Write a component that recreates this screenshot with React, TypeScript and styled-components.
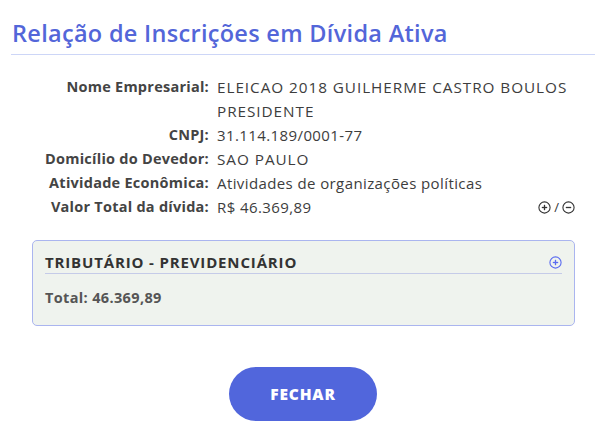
import React from "react";
import styled, { createGlobalStyle } from "styled-components";

const GlobalStyle = createGlobalStyle`
  html, body {
    margin: 0;
    padding: 0;
    background: #fff;
    font-family: "Open Sans", "Liberation Sans", sans-serif;
  }
`;

const Page = styled.div`
  width: 608px;
  height: 438px;
  padding: 18px 13px 0 11px;
  box-sizing: border-box;
  display: flex;
  flex-direction: column;
`;

const Title = styled.h1`
  margin: 0;
  padding: 0 0 6px 1px;
  font-size: 23.5px;
  line-height: 30px;
  font-weight: 600;
  color: #5366d9;
  border-bottom: 1px solid #cdd6f7;
  letter-spacing: 0.3px;
`;

const InfoGrid = styled.div`
  display: grid;
  grid-template-columns: 198px 1fr auto;
  column-gap: 8px;
  margin-top: 20px;
  font-size: 14.5px;
  line-height: 24px;
  color: #444;
`;

const Label = styled.span`
  text-align: right;
  font-weight: 700;
  color: #444;
  letter-spacing: 0.25px;
`;

const Value = styled.span<{ $span?: boolean; $caps?: boolean }>`
  grid-column: ${(p) => (p.$span ? "2 / 4" : "2")};
  padding-right: 20px;
  font-size: ${(p) => (p.$caps ? "15.3px" : "15px")};
  letter-spacing: ${(p) => (p.$caps ? "0.95px" : "0.4px")};
  color: #3d3d3d;
`;

const Toggles = styled.span`
  display: flex;
  align-items: center;
  gap: 3px;
  padding-right: 20px;
  color: #333;
  font-size: 13px;
`;

const Panel = styled.section`
  margin: 21px 20px 0 21px;
  border: 1px solid #aab5ef;
  border-radius: 5px;
  background: #eff3ee;
  padding: 11px 12px 17px 12px;
`;

const PanelHead = styled.div`
  display: flex;
  justify-content: space-between;
  align-items: center;
  line-height: 20px;
  padding-bottom: 1px;
  border-bottom: 1px solid #c5cbe8;
  font-size: 15px;
  font-weight: 700;
  color: #333;
  letter-spacing: 0.85px;
`;

const PanelTotal = styled.div`
  margin-top: 14px;
  line-height: 20px;
  font-size: 14.5px;
  font-weight: 700;
  color: #555;
  letter-spacing: 0.35px;
`;

const Footer = styled.div`
  display: flex;
  justify-content: center;
  margin-top: 41px;
`;

const CloseButton = styled.button`
  width: 148px;
  height: 54px;
  border: none;
  border-radius: 27px;
  background: #5166dc;
  color: #fff;
  font-family: inherit;
  font-size: 15.5px;
  font-weight: 800;
  letter-spacing: 0.8px;
  cursor: pointer;
`;

const CircleIcon = ({ minus, color }: { minus?: boolean; color: string }) => (
  <svg width="13" height="13" viewBox="0 0 13 13">
    <circle cx="6.5" cy="6.5" r="5.6" fill="none" stroke={color} strokeWidth="1.1" />
    <line x1="3.8" y1="6.5" x2="9.2" y2="6.5" stroke={color} strokeWidth="1.3" />
    {!minus && <line x1="6.5" y1="3.8" x2="6.5" y2="9.2" stroke={color} strokeWidth="1.3" />}
  </svg>
);

const rows: [string, string, boolean][] = [
  ["Nome Empresarial:", "ELEICAO 2018 GUILHERME CASTRO BOULOS PRESIDENTE", true],
  ["CNPJ:", "31.114.189/0001-77", false],
  ["Domicílio do Devedor:", "SAO PAULO", true],
  ["Atividade Econômica:", "Atividades de organizações políticas", false],
];

export default function App() {
  return (
    <>
      <GlobalStyle />
      <Page>
        <Title>Relação de Inscrições em Dívida Ativa</Title>
        <InfoGrid>
          {rows.map(([l, v, caps]) => (
            <React.Fragment key={l}>
              <Label>{l}</Label>
              <Value $span $caps={caps}>
                {v}
              </Value>
            </React.Fragment>
          ))}
          <Label>Valor Total da dívida:</Label>
          <Value>R$ 46.369,89</Value>
          <Toggles>
            <CircleIcon color="#333" />
            <span>/</span>
            <CircleIcon color="#333" minus />
          </Toggles>
        </InfoGrid>
        <Panel>
          <PanelHead>
            <span>TRIBUTÁRIO - PREVIDENCIÁRIO</span>
            <CircleIcon color="#5b6cf0" />
          </PanelHead>
          <PanelTotal>Total: 46.369,89</PanelTotal>
        </Panel>
        <Footer>
          <CloseButton>FECHAR</CloseButton>
        </Footer>
      </Page>
    </>
  );
}
